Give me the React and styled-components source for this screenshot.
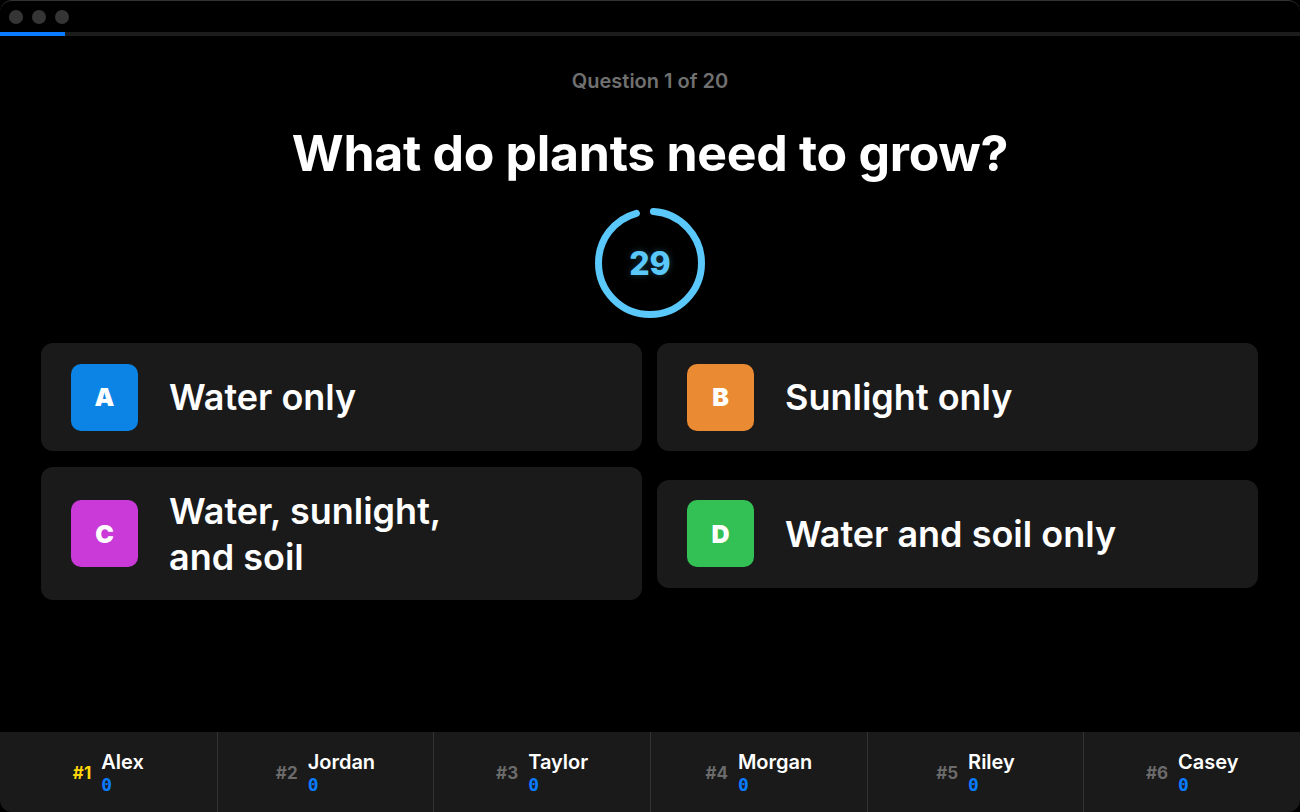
import React from "react";
import styled, { createGlobalStyle } from "styled-components";

const GlobalStyle = createGlobalStyle`
  html, body { margin: 0; padding: 0; background: #000; }
  body { font-family: Inter, "Noto Sans", "Liberation Sans", sans-serif; -webkit-font-smoothing: antialiased; }
  * { box-sizing: border-box; }
`;

const Window = styled.div`
  width: 1300px;
  height: 812px;
  background: #000;
  border-top: 1px solid #333;
  border-radius: 12px;
  overflow: hidden;
  display: flex;
  flex-direction: column;
  color: #fff;
`;

const TitleBar = styled.div`
  height: 31px;
  display: flex;
  align-items: center;
  gap: 9px;
  padding-left: 9px;
`;

const Light = styled.span`
  width: 14px;
  height: 14px;
  border-radius: 50%;
  background: #353535;
`;

const Track = styled.div`
  height: 4px;
  background: #1c1c1c;
  display: flex;
`;

const Fill = styled.div`
  height: 100%;
  background: #0a7cff;
`;

const Main = styled.main`
  flex: 1;
  display: flex;
  flex-direction: column;
  align-items: center;
  padding-top: 33px;
`;

const Counter = styled.div`
  font-size: 20px;
  line-height: 24px;
  font-weight: 600;
  color: #707070;
`;

const Question = styled.h1`
  margin: 30px 0 0;
  font-size: 50px;
  line-height: 60px;
  font-weight: 700;
  letter-spacing: -0.3px;
  color: #fff;
`;

const TimerWrap = styled.div`
  position: relative;
  margin-top: 25px;
  width: 110px;
  height: 110px;
  display: flex;
  align-items: center;
  justify-content: center;
`;

const TimerSvg = styled.svg`
  position: absolute;
  inset: 0;
  transform: rotate(-90deg);
`;

const TimerNumber = styled.span`
  position: relative;
  font-size: 32px;
  font-weight: 800;
  color: #5ac8fa;
  text-shadow: 0 0 6px rgba(90, 200, 250, 0.3);
`;

const Grid = styled.div`
  margin-top: 25px;
  width: 100%;
  padding: 0 42px 0 41px;
  display: grid;
  grid-template-columns: 1fr 1fr;
  column-gap: 15px;
  row-gap: 16px;
  align-items: center;
`;

const Card = styled.div`
  background: #1a1a1a;
  border-radius: 12px;
  padding: 20.5px 30px;
  display: flex;
  align-items: center;
  gap: 31px;
`;

const Badge = styled.div`
  flex: none;
  width: 67px;
  height: 67px;
  border-radius: 10px;
  background: ${(p) => p.$color};
  display: flex;
  align-items: center;
  justify-content: center;
  font-size: 25px;
  font-weight: 900;
  color: #fff;
`;

const AnswerText = styled.div`
  max-width: 336px;
  font-size: 36px;
  line-height: 46px;
  font-weight: 600;
  color: #fff;
`;

const Board = styled.footer`
  height: 80px;
  background: #1a1a1a;
  display: grid;
  grid-template-columns: repeat(6, 1fr);
`;

const Cell = styled.div`
  display: flex;
  align-items: center;
  justify-content: center;
  gap: 10px;
  & + & { border-left: 1px solid #333; }
`;

const Rank = styled.span`
  font-size: 17px;
  font-weight: 700;
  color: ${(p) => (p.$top ? "#ffd60a" : "#6b6b6b")};
  margin-top: 1px;
`;

const Player = styled.div`
  display: flex;
  flex-direction: column;
  padding-top: 2px;
`;

const Name = styled.span`
  font-size: 20px;
  line-height: 24px;
  font-weight: 600;
  color: #fff;
`;

const Score = styled.span`
  font-family: "DejaVu Sans Mono", "Liberation Mono", monospace;
  font-size: 18px;
  line-height: 22px;
  font-weight: 700;
  color: #0a7cff;
`;

const answers = [
  { key: "A", text: "Water only", color: "#0b84e6" },
  { key: "B", text: "Sunlight only", color: "#ea8a32" },
  { key: "C", text: "Water, sunlight, and soil", color: "#c93ad9" },
  { key: "D", text: "Water and soil only", color: "#33c055" },
];

const players = ["Alex", "Jordan", "Taylor", "Morgan", "Riley", "Casey"];

const R = 51.5;
const C = 2 * Math.PI * R;
const remaining = 29 / 30;

export default function App() {
  return (
    <>
      <GlobalStyle />
      <Window>
        <TitleBar>
          <Light />
          <Light />
          <Light />
        </TitleBar>
        <Track>
          <Fill style={{ width: `${(1 / 20) * 100}%` }} />
        </Track>
        <Main>
          <Counter>Question 1 of 20</Counter>
          <Question>What do plants need to grow?</Question>
          <TimerWrap>
            <TimerSvg width="110" height="110" viewBox="0 0 110 110">
              <circle
                cx="55"
                cy="55"
                r={R}
                fill="none"
                stroke="#5ac8fa"
                strokeWidth="7"
                strokeLinecap="round"
                strokeDasharray={`${C * remaining - 7} ${C}`}
                strokeDashoffset={-3.5}
              />
            </TimerSvg>
            <TimerNumber>29</TimerNumber>
          </TimerWrap>
          <Grid>
            {answers.map((a) => (
              <Card key={a.key}>
                <Badge $color={a.color}>{a.key}</Badge>
                <AnswerText>{a.text}</AnswerText>
              </Card>
            ))}
          </Grid>
        </Main>
        <Board>
          {players.map((p, i) => (
            <Cell key={p}>
              <Rank $top={i === 0}>#{i + 1}</Rank>
              <Player>
                <Name>{p}</Name>
                <Score>0</Score>
              </Player>
            </Cell>
          ))}
        </Board>
      </Window>
    </>
  );
}
